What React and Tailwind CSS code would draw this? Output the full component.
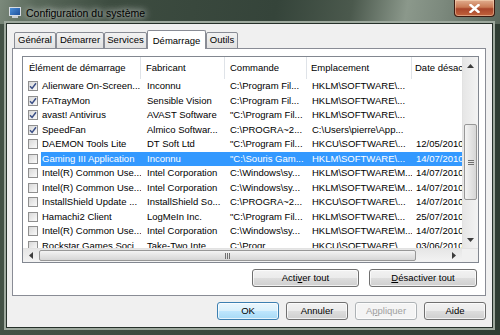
import React from 'react';

const rows = [
  { on: true, name: 'Alienware On-Screen...', fab: 'Inconnu', cmd: 'C:\\Program Fil...', loc: 'HKLM\\SOFTWARE\\...', date: '' },
  { on: true, name: 'FATrayMon', fab: 'Sensible Vision', cmd: 'C:\\Program Fil...', loc: 'HKLM\\SOFTWARE\\...', date: '' },
  { on: true, name: 'avast! Antivirus', fab: 'AVAST Software', cmd: '"C:\\Program Fil...', loc: 'HKLM\\SOFTWARE\\...', date: '' },
  { on: true, name: 'SpeedFan', fab: 'Almico Softwar...', cmd: 'C:\\PROGRA~2...', loc: 'C:\\Users\\pierre\\App...', date: '' },
  { on: false, name: 'DAEMON Tools Lite', fab: 'DT Soft Ltd', cmd: '"C:\\Program Fil...', loc: 'HKCU\\SOFTWARE\\...', date: '12/05/2010' },
  { on: false, name: 'Gaming III Application', fab: 'Inconnu', cmd: '"C:\\Souris Gam...', loc: 'HKLM\\SOFTWARE\\...', date: '14/07/2010', sel: true },
  { on: false, name: 'Intel(R) Common Use...', fab: 'Intel Corporation', cmd: 'C:\\Windows\\sy...', loc: 'HKLM\\SOFTWARE\\M...', date: '14/07/2010' },
  { on: false, name: 'Intel(R) Common Use...', fab: 'Intel Corporation', cmd: 'C:\\Windows\\sy...', loc: 'HKLM\\SOFTWARE\\M...', date: '14/07/2010' },
  { on: false, name: 'InstallShield Update ...', fab: 'InstallShield So...', cmd: 'C:\\PROGRA~2...', loc: 'HKCU\\SOFTWARE\\...', date: '14/07/2010' },
  { on: false, name: 'Hamachi2 Client', fab: 'LogMeIn Inc.', cmd: '"C:\\Program Fil...', loc: 'HKLM\\SOFTWARE\\...', date: '25/07/2010' },
  { on: false, name: 'Intel(R) Common Use...', fab: 'Intel Corporation', cmd: 'C:\\Windows\\sy...', loc: 'HKLM\\SOFTWARE\\M...', date: '14/07/2010' },
  { on: false, name: 'Rockstar Games Soci...', fab: 'Take-Two Inte...', cmd: 'C:\\Progr...', loc: 'HKCU\\SOFTWARE\\...', date: '03/06/2010' },
];

const tabs = [
  { label: 'Général', w: 'w-[42px]' },
  { label: 'Démarrer', w: 'w-[48px]' },
  { label: 'Services', w: 'w-[43px]' },
  { label: 'Démarrage', w: 'w-[59px]', active: true },
  { label: 'Outils', w: 'w-[32px]' },
];

function CheckBox({ on }) {
  return (
    <div className="w-[10px] h-[10px] border border-[#8f8f8f] bg-[linear-gradient(135deg,#d8d8d8,#fafafa)] flex items-center justify-center">
      {on && (
        <svg width="8" height="8" viewBox="0 0 8 8">
          <path d="M1 4.2 L3.1 6.4 L7 1.2" fill="none" stroke="#3b4f86" strokeWidth="1.5" />
        </svg>
      )}
    </div>
  );
}

function Arrow({ dir }) {
  const d = {
    up: 'M0 4 L3.5 0 L7 4 Z',
    down: 'M0 0 L3.5 4 L7 0 Z',
    left: 'M4 0 L0 3.5 L4 7 Z',
    right: 'M0 0 L4 3.5 L0 7 Z',
  }[dir];
  const vertical = dir === 'up' || dir === 'down';
  return (
    <svg width={vertical ? 7 : 4} height={vertical ? 4 : 7} viewBox={vertical ? '0 0 7 4' : '0 0 4 7'}>
      <path d={d} fill="#3c3c3c" />
    </svg>
  );
}

function Btn({ children, className = '', disabled, primary }) {
  let look = 'border-[#707070] bg-[linear-gradient(#f2f2f2_0%,#ebebeb_50%,#dddddd_51%,#cfcfcf_100%)] text-black';
  if (disabled) look = 'border-[#adb2b5] bg-[#f4f4f4] text-[#a0a0a0]';
  if (primary) look = 'border-[#3c7fb1] bg-[linear-gradient(#eaf6fd_0%,#d9f0fc_50%,#bee6fd_51%,#a7d9f5_100%)] text-black';
  return (
    <div className={`h-[18px] rounded-[3px] border ${look} shadow-[inset_0_0_0_1px_rgba(255,255,255,0.7)] text-[9.5px] flex items-center justify-center ${className}`}>
      {children}
    </div>
  );
}

export default function App() {
  return (
    <div className="w-[500px] h-[335px] flex flex-col bg-[linear-gradient(90deg,#445246_0%,#3a483d_40%,#2f3d33_100%)] font-['Liberation_Sans',Arial,sans-serif] overflow-hidden">
      {/* Title bar */}
      <div className="h-[24px] shrink-0 flex items-start bg-[linear-gradient(100deg,#7b897b_0%,#5a695b_7%,#3d4c40_22%,#35443a_55%,#4b594d_70%,#8b988b_81%,#7c897d_88%,#5a685c_100%)]">
        <div className="ml-[9px] mt-[7px] w-[12px] h-[11px] flex flex-col items-center">
          <div className="w-[12px] h-[9px] border border-[#d8dde4] bg-[linear-gradient(135deg,#4d8fd8,#1c4f9c)]" />
          <div className="w-[6px] h-[2px] bg-[#c9ced4]" />
        </div>
        <div className="ml-[5px] mt-[6px] text-[10.5px] leading-[14px] text-black [text-shadow:0_0_6px_rgba(255,255,255,0.9),0_0_10px_rgba(255,255,255,0.7)]">
          Configuration du système
        </div>
        <div className="ml-auto mr-[5px] w-[41px] h-[17px] rounded-b-[4px] border border-t-0 border-[#3c1a10] bg-[linear-gradient(#e1ad8f_0%,#c97a55_45%,#a8452a_55%,#c2643d_100%)] flex items-center justify-center shadow-[inset_0_0_0_1px_rgba(255,230,200,0.45)]">
          <svg width="11" height="9" viewBox="0 0 11 9">
            <path d="M1.5 1 L9.5 8 M9.5 1 L1.5 8" stroke="#fff" strokeWidth="2.4" strokeLinecap="square" />
          </svg>
        </div>
      </div>

      {/* Frame + client */}
      <div className="flex-1 flex pl-[7px] pr-[8px] pb-[8px] min-h-0">
        <div className="w-[485px] shrink-0 flex flex-col bg-[#f0f0f0] shadow-[0_0_0_1px_#26312a,0_0_0_3px_#9ea99e] pt-[6px] pl-[5px] pr-[6px]">
          {/* Tabs */}
          <div className="h-[19px] -mb-px flex items-end pl-[2px] relative z-10">
            {tabs.map((t) =>
              t.active ? (
                <div key={t.label} className={`${t.w} h-[19px] border border-b-0 border-[#898c95] rounded-t-[2px] bg-white text-[9.5px] flex items-start justify-center pt-[3px]`}>
                  {t.label}
                </div>
              ) : (
                <div key={t.label} className={`${t.w} h-[17px] border border-[#898c95] rounded-t-[2px] bg-[linear-gradient(#f2f2f2,#e1e1e1)] text-[9.5px] flex items-center justify-center`}>
                  {t.label}
                </div>
              )
            )}
          </div>

          {/* Tab panel */}
          <div className="w-[474px] h-[248px] border border-[#898c95] bg-white pt-[7px] pl-[9px] pr-[6px] flex flex-col">
            {/* List */}
            <div className="w-[457px] h-[207px] border border-[#828790] flex flex-col bg-white">
              <div className="flex-1 flex min-h-0">
                <div className="w-[439px] flex flex-col overflow-hidden text-[9.5px] text-black">
                  {/* Header */}
                  <div className="h-[22px] flex items-center shrink-0">
                    <div className="w-[118px] shrink-0 h-full border-r border-[#dfe3e8] pl-[6px] flex items-center">Élément de démarrage</div>
                    <div className="w-[84px] shrink-0 h-full border-r border-[#dfe3e8] pl-[5px] flex items-center">Fabricant</div>
                    <div className="w-[82px] shrink-0 h-full border-r border-[#dfe3e8] pl-[5px] flex items-center">Commande</div>
                    <div className="w-[105px] shrink-0 h-full border-r border-[#dfe3e8] pl-[4px] flex items-center">Emplacement</div>
                    <div className="w-[50px] shrink-0 h-full pl-[3px] flex items-center whitespace-nowrap overflow-hidden">Date désactivation</div>
                  </div>
                  {/* Rows */}
                  {rows.map((r, i) => (
                    <div key={i} className="h-[14.5px] leading-[14.5px] flex shrink-0 whitespace-nowrap">
                      <div className="w-[18px] shrink-0 pl-[5px] flex items-center">
                        <CheckBox on={r.on} />
                      </div>
                      <div className={`w-[421px] shrink-0 flex overflow-hidden ${r.sel ? 'bg-[#3399ff] text-white' : ''}`}>
                        <div className="w-[100px] shrink-0 pl-px overflow-hidden">{r.name}</div>
                        <div className="w-[84px] shrink-0 pl-[6px] overflow-hidden">{r.fab}</div>
                        <div className="w-[82px] shrink-0 pl-[5px] overflow-hidden">{r.cmd}</div>
                        <div className="w-[105px] shrink-0 pl-[5px] overflow-hidden">{r.loc}</div>
                        <div className="w-[50px] shrink-0 pl-[4px] overflow-hidden">{r.date}</div>
                      </div>
                    </div>
                  ))}
                </div>

                {/* Vertical scrollbar */}
                <div className="w-[16px] shrink-0 flex flex-col bg-[linear-gradient(90deg,#e6e6e6,#f3f3f3)] border-l border-[#e2e2e2]">
                  <div className="h-[17px] flex items-center justify-center">
                    <Arrow dir="up" />
                  </div>
                  <div className="h-[50px]" />
                  <div className="h-[76px] mx-px rounded-[2px] border border-[#979797] bg-[linear-gradient(90deg,#f4f4f4,#e4e4e4_50%,#d6d6d6)] flex items-center justify-center">
                    <div className="flex flex-col gap-[1px]">
                      <div className="w-[6px] h-px bg-[#707070]" />
                      <div className="w-[6px] h-px bg-[#707070]" />
                      <div className="w-[6px] h-px bg-[#707070]" />
                    </div>
                  </div>
                  <div className="flex-1" />
                  <div className="h-[17px] flex items-center justify-center">
                    <Arrow dir="down" />
                  </div>
                </div>
              </div>

              {/* Horizontal scrollbar */}
              <div className="h-[14px] flex shrink-0 bg-[linear-gradient(#e6e6e6,#f3f3f3)] border-t border-[#e2e2e2]">
                <div className="w-[16px] flex items-center justify-center">
                  <Arrow dir="left" />
                </div>
                <div className="w-[377px] my-px rounded-[2px] border border-[#979797] bg-[linear-gradient(#f4f4f4,#e4e4e4_50%,#d6d6d6)] flex items-center justify-center">
                  <div className="flex gap-[1px]">
                    <div className="w-px h-[6px] bg-[#707070]" />
                    <div className="w-px h-[6px] bg-[#707070]" />
                    <div className="w-px h-[6px] bg-[#707070]" />
                  </div>
                </div>
                <div className="flex-1 flex items-center justify-end pr-[6px]">
                  <Arrow dir="right" />
                </div>
                <div className="w-[16px] bg-[#f0f0f0]" />
              </div>
            </div>

            {/* Activer / Désactiver */}
            <div className="mt-[6px] flex justify-end gap-[10px] pr-[2px]">
              <Btn className="w-[107px]">
                <span>Acti<u>v</u>er tout</span>
              </Btn>
              <Btn className="w-[108px]">
                <span><u>D</u>ésactiver tout</span>
              </Btn>
            </div>
          </div>

          {/* Dialog buttons */}
          <div className="mt-[6px] flex justify-end gap-[7px]">
            <Btn primary className="w-[62px]">OK</Btn>
            <Btn className="w-[62px]">Annuler</Btn>
            <Btn disabled className="w-[62px]">
              <span>A<u>p</u>pliquer</span>
            </Btn>
            <Btn className="w-[62px]">Aide</Btn>
          </div>
        </div>
      </div>
    </div>
  );
}
